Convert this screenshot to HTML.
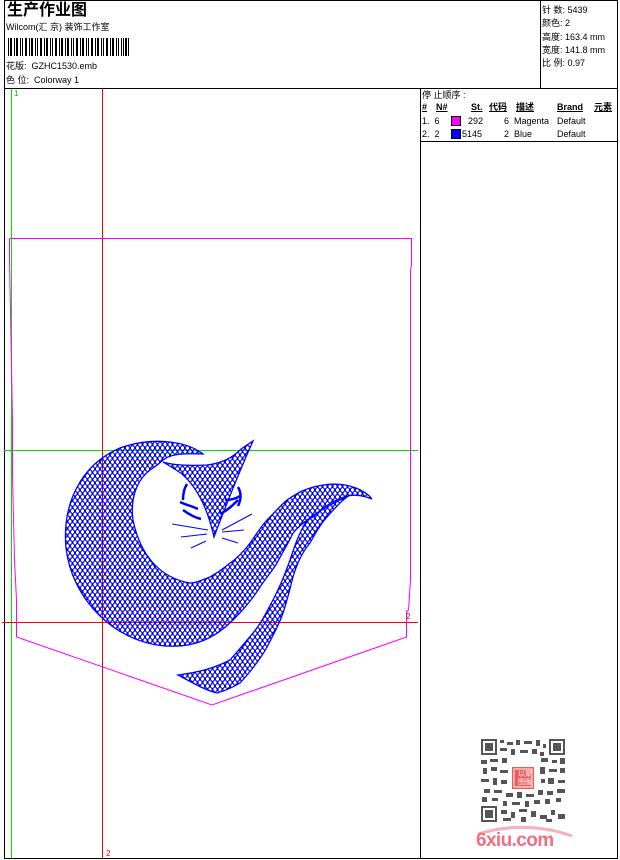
<!DOCTYPE html>
<html><head><meta charset="utf-8"><style>
body{margin:0;width:620px;height:860px;background:#fff;overflow:hidden;position:relative;font-family:"Liberation Sans","Noto Sans CJK SC",sans-serif;color:#000}
.t{position:absolute;font-size:9px;line-height:11px;white-space:nowrap}
.b{font-weight:bold}
</style></head><body>
<svg width="620" height="860" style="position:absolute;left:0;top:0" shape-rendering="crispEdges">
<defs>
<pattern id="h" width="5" height="7" patternUnits="userSpaceOnUse">
<path d="M0 0L5 7M5 0L0 7" stroke="#0000ff" stroke-width="1.1" fill="none"/>
</pattern>
</defs>
<rect x="4.5" y="0.5" width="613" height="858" fill="none" stroke="#000"/>
<line x1="4" y1="88.5" x2="618" y2="88.5" stroke="#000"/>
<line x1="540.5" y1="0" x2="540.5" y2="88" stroke="#000"/>
<line x1="420.5" y1="88" x2="420.5" y2="859" stroke="#000"/>
<line x1="420" y1="141.5" x2="618" y2="141.5" stroke="#000"/>
<g fill="#000">
<rect x="8" y="38" width="1" height="18"/><rect x="10" y="38" width="2" height="18"/><rect x="14" y="38" width="1" height="18"/><rect x="16" y="38" width="2" height="18"/><rect x="20" y="38" width="1" height="18"/><rect x="22" y="38" width="1" height="18"/><rect x="25" y="38" width="2" height="18"/><rect x="29" y="38" width="1" height="18"/><rect x="31" y="38" width="2" height="18"/><rect x="35" y="38" width="1" height="18"/><rect x="37" y="38" width="1" height="18"/><rect x="40" y="38" width="2" height="18"/><rect x="44" y="38" width="1" height="18"/><rect x="46" y="38" width="2" height="18"/><rect x="50" y="38" width="1" height="18"/><rect x="52" y="38" width="1" height="18"/><rect x="55" y="38" width="2" height="18"/><rect x="59" y="38" width="1" height="18"/><rect x="61" y="38" width="2" height="18"/><rect x="65" y="38" width="1" height="18"/><rect x="67" y="38" width="2" height="18"/><rect x="71" y="38" width="1" height="18"/><rect x="73" y="38" width="1" height="18"/><rect x="76" y="38" width="2" height="18"/><rect x="80" y="38" width="1" height="18"/><rect x="82" y="38" width="2" height="18"/><rect x="86" y="38" width="1" height="18"/><rect x="88" y="38" width="1" height="18"/><rect x="91" y="38" width="2" height="18"/><rect x="95" y="38" width="1" height="18"/><rect x="97" y="38" width="2" height="18"/><rect x="101" y="38" width="1" height="18"/><rect x="103" y="38" width="1" height="18"/><rect x="106" y="38" width="2" height="18"/><rect x="110" y="38" width="1" height="18"/><rect x="112" y="38" width="2" height="18"/><rect x="116" y="38" width="1" height="18"/><rect x="118" y="38" width="1" height="18"/><rect x="121" y="38" width="1" height="18"/><rect x="123" y="38" width="1" height="18"/><rect x="125" y="38" width="2" height="18"/><rect x="128" y="38" width="1" height="18"/>
</g>
<line x1="11.5" y1="89" x2="11.5" y2="858" stroke="#00e000"/>
<line x1="4" y1="450.5" x2="418" y2="450.5" stroke="#00e000"/>
<line x1="102.5" y1="89" x2="102.5" y2="858" stroke="#ff0000"/>
<line x1="2" y1="622.5" x2="418" y2="622.5" stroke="#ff0000"/>
<polyline points="9.5,238.5 411.5,238.5 411.5,265 410.5,270 410.5,580 408.5,610 406.5,612 406.5,637 212,705 16.5,637 16.5,600 14.5,560 12.5,475 12.5,420 9.5,260 9.5,238.5" fill="none" stroke="#ff00ff" shape-rendering="auto"/>
<g shape-rendering="auto" stroke="#0000ff" stroke-width="1.3" fill="url(#h)">
<path d="M203,454 C185,440 150,437 120,448 C80,465 62,505 66,548 C72,600 115,642 165,646 C195,648 215,638 233,620 C248,605 255,595 260,587 C268,575 273,570 277,563 C285,548 290,540 293,533 C300,525 306,520 313,517 C325,505 335,500 347,496 C355,494 365,496 372,499 C365,490 350,484 333,484 C318,485 308,488 300,492 C293,496 290,498 287,500 C278,508 273,514 267,520 C258,530 253,540 247,547 C240,555 235,560 230,563 C222,570 215,574 210,577 C200,581 195,583 190,583 C160,578 140,555 133,520 C130,498 137,480 150,470 C156,466 160,463 163,460 C170,455 177,453 203,454 Z"/>
<path d="M350,495 C335,502 320,510 307,520 C298,535 294,548 290,560 C283,580 278,590 273,600 C265,615 260,625 253,633 C243,645 237,652 230,660 C215,668 200,672 178,675 C195,684 205,690 217,693 C228,690 235,686 240,683 C250,672 260,660 267,647 C275,632 280,622 283,613 C288,598 290,588 293,577 C298,560 304,550 310,543 C316,532 320,525 327,517 C335,508 342,500 350,495 Z"/>
<path d="M163,462 C172,465 185,466 207,465 C225,463 235,455 240,450 C245,446 250,443 253,441 C240,470 228,500 214,537 C208,510 198,488 182,474 C175,469 168,465 163,462 Z"/>
</g>
<g stroke="#0000ff" stroke-width="2.5" fill="none" shape-rendering="auto">
<path d="M183,500 C183,492 185,487 187,484 M180,502 C186,505 192,506 198,509 M183,510 C190,515 196,518 201,519"/>
<path d="M238,487 C242,494 241,500 238,506 M225,500 C232,500 237,498 240,496 M220,514 C228,510 233,505 238,500"/>
</g>
<g stroke="#0000ff" stroke-width="1" fill="none" shape-rendering="auto">
<path d="M172,524 L208,530 M181,537 L207,534 M191,548 L206,541 M222,530 L252,514 M222,532 L244,530 M222,538 L238,543"/>
</g>
<g fill="#555">
<rect x="481" y="739" width="16" height="16"/><rect x="549" y="739" width="16" height="16"/><rect x="481" y="806" width="16" height="16"/>
</g>
<g fill="#fff"><rect x="483" y="741" width="12" height="12"/><rect x="551" y="741" width="12" height="12"/><rect x="483" y="808" width="12" height="12"/></g>
<g fill="#555"><rect x="485" y="743" width="8" height="8"/><rect x="553" y="743" width="8" height="8"/><rect x="485" y="810" width="8" height="8"/>
<rect x="500" y="740" width="4" height="3"/><rect x="507" y="742" width="6" height="3"/><rect x="516" y="740" width="4" height="5"/><rect x="524" y="741" width="8" height="3"/><rect x="536" y="740" width="4" height="6"/><rect x="543" y="744" width="3" height="4"/>
<rect x="500" y="748" width="7" height="3"/><rect x="511" y="749" width="4" height="6"/><rect x="520" y="750" width="8" height="3"/><rect x="532" y="749" width="5" height="5"/><rect x="540" y="752" width="4" height="4"/>
<rect x="481" y="760" width="6" height="4"/><rect x="490" y="759" width="8" height="3"/><rect x="502" y="758" width="5" height="5"/><rect x="541" y="758" width="7" height="4"/><rect x="552" y="760" width="5" height="3"/><rect x="560" y="758" width="5" height="6"/>
<rect x="483" y="768" width="4" height="6"/><rect x="491" y="767" width="6" height="4"/><rect x="500" y="770" width="8" height="3"/><rect x="540" y="767" width="5" height="7"/><rect x="549" y="769" width="8" height="3"/><rect x="560" y="768" width="5" height="5"/>
<rect x="481" y="779" width="8" height="3"/><rect x="493" y="778" width="4" height="7"/><rect x="501" y="780" width="6" height="4"/><rect x="541" y="779" width="4" height="4"/><rect x="548" y="778" width="6" height="6"/><rect x="558" y="780" width="7" height="3"/>
<rect x="484" y="789" width="6" height="4"/><rect x="494" y="790" width="8" height="3"/><rect x="506" y="793" width="7" height="4"/><rect x="517" y="792" width="5" height="6"/><rect x="526" y="794" width="8" height="3"/><rect x="538" y="790" width="5" height="5"/><rect x="547" y="791" width="6" height="4"/><rect x="557" y="789" width="8" height="4"/>
<rect x="482" y="797" width="5" height="5"/><rect x="492" y="798" width="6" height="3"/><rect x="503" y="801" width="4" height="5"/><rect x="512" y="802" width="8" height="3"/><rect x="525" y="801" width="4" height="6"/><rect x="534" y="800" width="6" height="4"/><rect x="545" y="799" width="5" height="5"/><rect x="556" y="798" width="5" height="4"/>
<rect x="501" y="810" width="6" height="4"/><rect x="511" y="812" width="4" height="6"/><rect x="519" y="809" width="8" height="3"/><rect x="531" y="811" width="5" height="6"/><rect x="540" y="815" width="7" height="4"/><rect x="551" y="810" width="4" height="5"/><rect x="558" y="814" width="7" height="5"/>
<rect x="503" y="818" width="8" height="3"/><rect x="521" y="817" width="5" height="5"/><rect x="546" y="819" width="6" height="3"/>
</g>
<rect x="512" y="767" width="22" height="22" fill="#f05a5a"/>
<rect x="514" y="769" width="18" height="18" fill="none" stroke="#fff" stroke-width="0.8"/>
<path d="M478,834 C510,824 545,826 572,836" stroke="#f5b0b8" stroke-width="3" fill="none" shape-rendering="auto"/>
</svg>
<div class="t" style="left:518px;top:771px;font-size:7px;line-height:8px;color:#fff">以聚<br>图版</div>
<div class="t b" style="left:476px;top:830px;font-size:19px;line-height:21px;letter-spacing:-0.6px;color:#ef7080">6xiu.com</div>

<div class="t b" style="left:7px;top:2px;font-size:16px;line-height:18px">生产作业图</div>
<div class="t" style="left:6px;top:22px">Wilcom(汇 京) 装饰工作室</div>
<div class="t" style="left:6px;top:61px">花版:&nbsp; GZHC1530.emb</div>
<div class="t" style="left:6px;top:75px">色 位:&nbsp; Colorway 1</div>
<div class="t" style="left:542px;top:5px">针 数: 5439</div>
<div class="t" style="left:542px;top:18px">颜色: 2</div>
<div class="t" style="left:542px;top:32px">高度: 163.4 mm</div>
<div class="t" style="left:542px;top:45px">宽度: 141.8 mm</div>
<div class="t" style="left:542px;top:58px">比 例: 0.97</div>
<div class="t" style="left:14px;top:88px;color:#00c000;font-size:8px">1</div>
<div class="t" style="left:106px;top:848px;color:#f00;font-size:8px">2</div>
<div class="t" style="left:406px;top:611px;color:#f00;font-size:8px">2</div>

<div class="t" style="left:422px;top:90px">停 止顺序 :</div>
<div class="t b" style="left:422px;top:102px;text-decoration:underline">#</div>
<div class="t b" style="left:436px;top:102px;text-decoration:underline">N#</div>
<div class="t b" style="left:471px;top:102px;text-decoration:underline">St.</div>
<div class="t b" style="left:489px;top:102px;text-decoration:underline">代码</div>
<div class="t b" style="left:516px;top:102px;text-decoration:underline">描述</div>
<div class="t b" style="left:557px;top:102px;text-decoration:underline">Brand</div>
<div class="t b" style="left:594px;top:102px;text-decoration:underline">元素</div>
<div class="t" style="left:422px;top:116px">1.&nbsp; 6</div>
<div style="position:absolute;left:451px;top:116px;width:8px;height:8px;background:#ff00ff;border:1px solid #000"></div>
<div class="t" style="left:468px;top:116px">292</div>
<div class="t" style="left:504px;top:116px">6&nbsp; Magenta</div>
<div class="t" style="left:557px;top:116px">Default</div>
<div class="t" style="left:422px;top:129px">2.&nbsp; 2</div>
<div style="position:absolute;left:451px;top:129px;width:8px;height:8px;background:#0000ff;border:1px solid #000"></div>
<div class="t" style="left:462px;top:129px">5145</div>
<div class="t" style="left:504px;top:129px">2&nbsp; Blue</div>
<div class="t" style="left:557px;top:129px">Default</div>
</body></html>
